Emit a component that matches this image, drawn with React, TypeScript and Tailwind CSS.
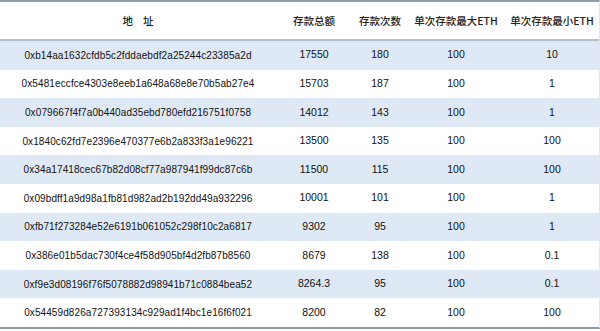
const rows = [
  ["0xb14aa1632cfdb5c2fddaebdf2a25244c23385a2d", "17550", "180", "100", "10"],
  ["0x5481eccfce4303e8eeb1a648a68e8e70b5ab27e4", "15703", "187", "100", "1"],
  ["0x079667f4f7a0b440ad35ebd780efd216751f0758", "14012", "143", "100", "1"],
  ["0x1840c62fd7e2396e470377e6b2a833f3a1e96221", "13500", "135", "100", "100"],
  ["0x34a17418cec67b82d08cf77a987941f99dc87c6b", "11500", "115", "100", "100"],
  ["0x09bdff1a9d98a1fb81d982ad2b192dd49a932296", "10001", "101", "100", "1"],
  ["0xfb71f273284e52e6191b061052c298f10c2a6817", "9302", "95", "100", "1"],
  ["0x386e01b5dac730f4ce4f58d905bf4d2fb87b8560", "8679", "138", "100", "0.1"],
  ["0xf9e3d08196f76f5078882d98941b71c0884bea52", "8264.3", "95", "100", "0.1"],
  ["0x54459d826a727393134c929ad1f4bc1e16f6f021", "8200", "82", "100", "100"],
];

const cols = "grid grid-cols-[276px_76px_56px_96px_96px]";

export default function App() {
  return (
    <div className="w-[600px] h-[331px] bg-white overflow-hidden" style={{ fontFamily: "'Liberation Sans', 'Noto Sans CJK SC', sans-serif" }}>
      <div className="border-t-2 border-b-2 border-[#8d9cae] border-r border-r-[#e3e8ee]">
        <div className={`${cols} h-[39px] items-center text-[10.5px] font-medium text-[#222] border-b-2 border-[#b3bfcd]`} style={{ fontFamily: "'Noto Sans CJK SC', sans-serif" }}>
          <div className="flex justify-center gap-[10px] pt-px">
            <span>地</span>
            <span>址</span>
          </div>
          <div className="text-center pt-px">存款总额</div>
          <div className="text-center pt-px">存款次数</div>
          <div className="text-center pt-px">单次存款最大ETH</div>
          <div className="text-center pt-px">单次存款最小ETH</div>
        </div>
        {rows.map((r, i) => (
          <div key={r[0]} className={`${cols} h-[28.6px] items-center text-[10px] text-[#111] ${i % 2 === 0 ? "bg-[#dfe9f5]" : "bg-white"}`}>
            <div className="text-center tracking-[0.1px]">{r[0]}</div>
            <div className="text-center text-[10.5px]">{r[1]}</div>
            <div className="text-center text-[10.5px]">{r[2]}</div>
            <div className="text-center text-[10.5px]">{r[3]}</div>
            <div className="text-center text-[10.5px]">{r[4]}</div>
          </div>
        ))}
      </div>
    </div>
  );
}
